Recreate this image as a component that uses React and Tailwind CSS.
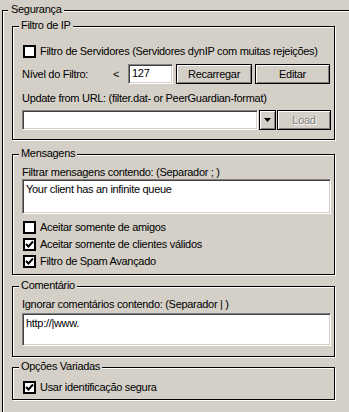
import React from 'react';

const Group = ({ title, titleClass, className, children }) => (
  <div className={`relative border border-black shadow-[1px_1px_0_#fff,inset_1px_1px_0_#fff] ${className}`}>
    <span className={`absolute top-[-8px] bg-[#d4d0c8] px-[2px] leading-[13px] ${titleClass}`}>{title}</span>
    {children}
  </div>
);

const Check = ({ checked, label, className }) => (
  <div className={`flex items-center h-[13px] ${className}`}>
    <div className="w-[13px] h-[13px] shrink-0 border-2 border-black bg-white flex items-center justify-center">
      {checked && (
        <svg width="9" height="9" viewBox="0 0 9 9">
          <polyline points="1,4 3.5,6.5 8,1.5" fill="none" stroke="black" strokeWidth="2" />
        </svg>
      )}
    </div>
    <span className="ml-[4px] leading-[13px]">{label}</span>
  </div>
);

const field = 'border border-t-[#808080] border-l-[#808080] border-b-white border-r-white shadow-[inset_1px_1px_0_#404040,inset_-1px_-1px_0_#d4d0c8] bg-white';
const button = 'border border-black shadow-[inset_1px_1px_0_#fff,inset_-1px_-1px_0_#808080] flex items-center justify-center leading-[13px]';

const App = () => {
  return (
    <div className="w-[349px] h-[412px] overflow-hidden whitespace-nowrap bg-[#d4d0c8] text-[11px] tracking-[-0.3px] text-black font-['Liberation_Sans',Arial,sans-serif]">
      <div className="pt-[10px] pl-[2px]">
        <Group title="Segurança" titleClass="left-[5px] pl-[3px]" className="w-[400px] h-[430px] pt-[15px] pl-[9px]">
          <Group title="Filtro de IP" titleClass="left-[6px]" className="w-[323px] h-[114px] pl-[9px]">
            <Check className="mt-[18px] ml-[1px]" label="Filtro de Servidores (Servidores dynIP com muitas rejeições)" />
            <div className="flex items-center h-[20px] mt-[6px]">
              <span className="w-[91px]">Nível do Filtro:</span>
              <span className="w-[15px]">&lt;</span>
              <div className={`${field} w-[45px] h-[20px] pl-[3px] leading-[16px]`}>127</div>
              <div className={`${button} w-[76px] h-[20px] ml-[3px]`}>Recarregar</div>
              <div className={`${button} w-[75px] h-[20px] ml-[3px]`}>Editar</div>
            </div>
            <div className="mt-[8px] leading-[13px]">Update from URL: (filter.dat- or PeerGuardian-format)</div>
            <div className="flex items-center h-[20px] mt-[5px]">
              <div className={`${field} w-[236px] h-[20px]`} />
              <div className={`${button} w-[17px] h-[20px] ml-[1px]`}>
                <svg width="7" height="4" viewBox="0 0 7 4">
                  <polygon points="0,0 7,0 3.5,4" fill="black" />
                </svg>
              </div>
              <div className={`${button} w-[54px] h-[20px] ml-[1px] text-[#808080] [text-shadow:1px_1px_0_#fff]`}>Load</div>
            </div>
          </Group>

          <Group title="Mensagens" titleClass="left-[6px]" className="w-[323px] h-[121px] mt-[14px] pl-[9px]">
            <div className="mt-[11px] leading-[13px]">Filtrar mensagens contendo: (Separador ; )</div>
            <div className={`${field} w-[309px] h-[35px] px-[3px] pt-[2px] leading-[14px]`}>Your client has an infinite queue</div>
            <Check className="mt-[7px] ml-[1px]" label="Aceitar somente de amigos" />
            <Check className="mt-[4px] ml-[1px]" checked label="Aceitar somente de clientes válidos" />
            <Check className="mt-[4px] ml-[1px]" checked label="Filtro de Spam Avançado" />
          </Group>

          <Group title="Comentário" titleClass="left-[6px]" className="w-[323px] h-[71px] mt-[11px] pl-[9px]">
            <div className="mt-[11px] leading-[13px]">Ignorar comentários contendo: (Separador | )</div>
            <div className={`${field} w-[309px] h-[33px] mt-[2px] px-[3px] pt-[2px] leading-[14px]`}>http://|www.</div>
          </Group>

          <Group title="Opções Variadas" titleClass="left-[6px]" className="w-[323px] h-[33px] mt-[10px] pl-[9px]">
            <Check className="mt-[13px] ml-[1px]" checked label="Usar identificação segura" />
          </Group>
        </Group>
      </div>
    </div>
  );
};

export default App;
